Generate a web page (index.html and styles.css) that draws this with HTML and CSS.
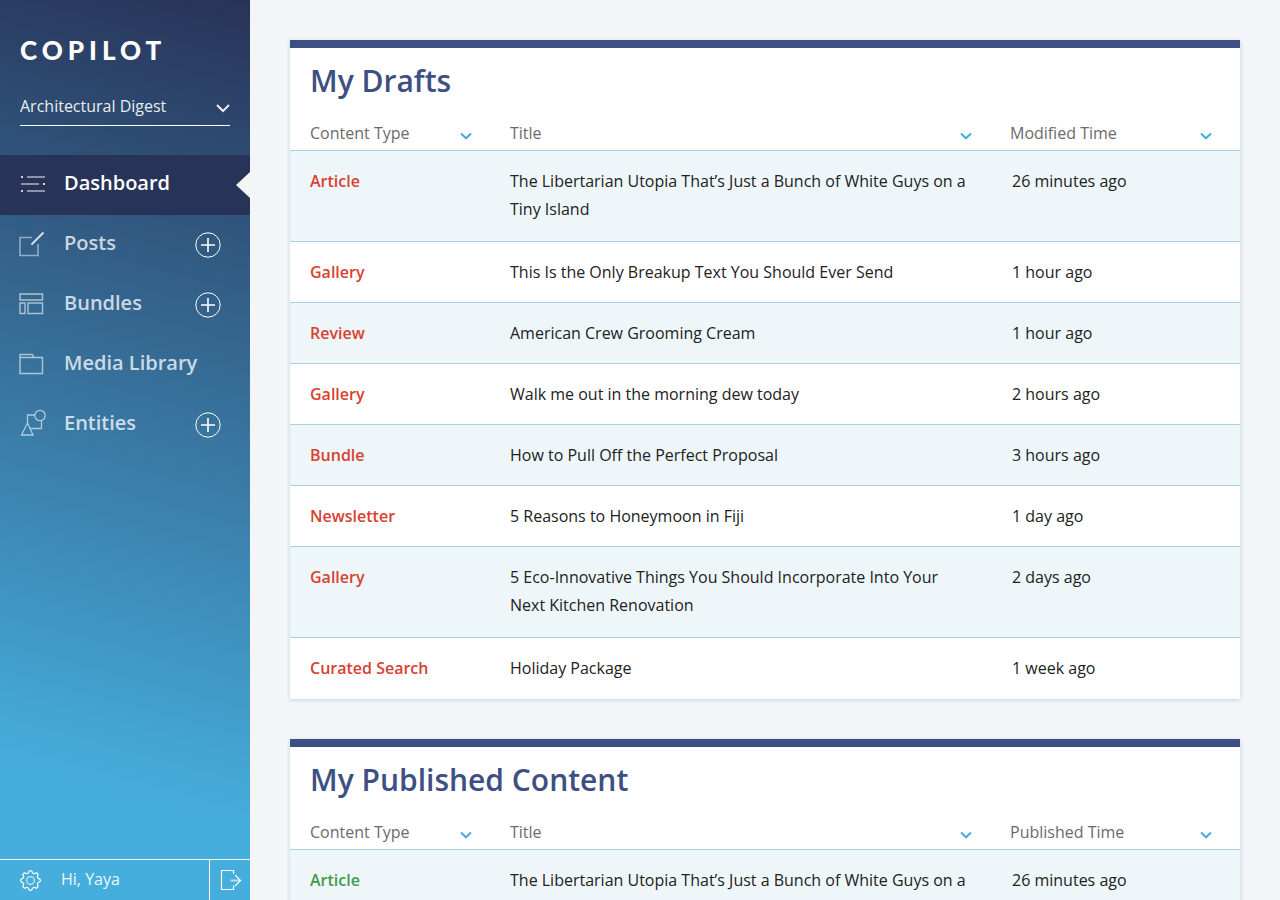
FILE: index.html
```html
<!DOCTYPE html>
<html lang="en">
<head>
<meta charset="utf-8">
<meta name="viewport" content="width=device-width, initial-scale=1">
<title>Copilot</title>
<link rel="stylesheet" href="styles.css">
</head>
<body>
<svg class="sprite" aria-hidden="true">
  <symbol id="plus" viewBox="0 0 26 26"><circle cx="13" cy="13" r="12.2"/><path d="M13 6v14M6 13h14" stroke-width="1.6"/></symbol>
  <symbol id="chevron" viewBox="0 0 12 8"><path d="M1 1.500 6 6.300l5-4.800" stroke-width="2"/></symbol>
</svg>
<div class="app">
  <aside class="sidebar">
    <div class="logo">COPILOT</div>
    <div class="site">
      <select class="site-select" aria-label="Site"><option>Architectural Digest</option></select>
      <svg class="site-arrow" viewBox="0 0 14 10" aria-hidden="true"><path d="M1 2 7 8l6-6"/></svg>
    </div>
    <nav class="nav">
      <div class="nav-item active">
        <a class="nav-link" href="#dashboard">
          <svg class="nav-icon" viewBox="0 0 28 28" aria-hidden="true">
            <path class="soft" d="M9 6h18M3 13h18M9 20h18" stroke-width="2"/>
            <path d="M3 6h2M25 13h2M3 20h2" stroke-width="2"/>
          </svg>Dashboard</a>
      </div>
      <div class="nav-item">
        <a class="nav-link" href="#posts">
          <svg class="nav-icon" viewBox="0 0 28 28" aria-hidden="true">
            <path class="soft" d="M14 6.500H2v18h18V13" stroke-width="1.600"/>
            <path d="M13.500 13.500 25.500 1.500" stroke-width="2"/>
          </svg>Posts</a>
        <button class="add" type="button" aria-label="Add post"><svg aria-hidden="true"><use href="#plus"/></svg></button>
      </div>
      <div class="nav-item">
        <a class="nav-link" href="#bundles">
          <svg class="nav-icon" viewBox="0 0 28 28" aria-hidden="true">
            <path class="medium" d="M2 3h22.500v6H2zM2 12h5v10.500H2zM10 12h14.500v10.500H10z" stroke-width="1.400"/>
          </svg>Bundles</a>
        <button class="add" type="button" aria-label="Add bundle"><svg aria-hidden="true"><use href="#plus"/></svg></button>
      </div>
      <div class="nav-item">
        <a class="nav-link" href="#media">
          <svg class="nav-icon" viewBox="0 0 28 28" aria-hidden="true">
            <path class="medium" d="M2 6.500V3.500h12L16 6.500h8.500V22.500H2zM2 6.500h14" stroke-width="1.400"/>
          </svg>Media Library</a>
      </div>
      <div class="nav-item">
        <a class="nav-link" href="#entities">
          <svg class="nav-icon" viewBox="0 0 28 28" aria-hidden="true">
            <g class="medium" stroke-width="1.300"><circle cx="22" cy="4.500" r="5.200"/>
            <path d="M16.800 4H9.500v8M23.500 9.700V17.500H12.200M9.500 12 15 24H3.500z"/></g>
          </svg>Entities</a>
        <button class="add" type="button" aria-label="Add entity"><svg aria-hidden="true"><use href="#plus"/></svg></button>
      </div>
    </nav>
    <footer class="user">
      <a class="user-link" href="#settings">
        <svg class="gear" viewBox="0 0 22 22" aria-hidden="true">
          <path d="M19.800 9.130A1.900 1.900 0 0 1 19.800 12.870A2 2 0 0 0 18.550 15.900A1.900 1.900 0 0 1 15.900 18.550A2 2 0 0 0 12.870 19.800A1.900 1.900 0 0 1 9.130 19.800A2 2 0 0 0 6.100 18.550A1.900 1.900 0 0 1 3.450 15.900A2 2 0 0 0 2.200 12.870A1.900 1.900 0 0 1 2.200 9.130A2 2 0 0 0 3.450 6.100A1.900 1.900 0 0 1 6.100 3.450A2 2 0 0 0 9.130 2.200A1.900 1.900 0 0 1 12.870 2.200A2 2 0 0 0 15.900 3.450A1.900 1.900 0 0 1 18.550 6.100A2 2 0 0 0 19.800 9.130z"/>
          <circle class="medium" cx="11" cy="11" r="4"/>
        </svg><span class="greeting">Hi, Yaya</span></a>
      <button class="logout" type="button" aria-label="Log out">
        <svg viewBox="0 0 22 22" aria-hidden="true"><path d="M13.500 5V1.500H1.500v19H13.500v-4M15 6l5.500 5.500L15 17"/><path class="soft" d="M10.500 11.500H20" stroke-width="2"/></svg>
      </button>
    </footer>
  </aside>

  <main class="content">
    <section class="card">
      <h2 class="card-title">My Drafts</h2>
      <table class="list drafts">
        <thead><tr>
          <th class="col-type"><button class="sort" type="button">Content Type<svg aria-hidden="true"><use href="#chevron"/></svg></button></th>
          <th><button class="sort" type="button">Title<svg aria-hidden="true"><use href="#chevron"/></svg></button></th>
          <th class="col-time"><button class="sort" type="button">Modified Time<svg aria-hidden="true"><use href="#chevron"/></svg></button></th>
        </tr></thead>
        <tbody>
          <tr class="tall"><td>Article</td><td>The Libertarian Utopia That’s Just a Bunch of White Guys on a Tiny Island</td><td>26 minutes ago</td></tr>
          <tr><td>Gallery</td><td>This Is the Only Breakup Text You Should Ever Send</td><td>1 hour ago</td></tr>
          <tr><td>Review</td><td>American Crew Grooming Cream</td><td>1 hour ago</td></tr>
          <tr><td>Gallery</td><td>Walk me out in the morning dew today</td><td>2 hours ago</td></tr>
          <tr><td>Bundle</td><td>How to Pull Off the Perfect Proposal</td><td>3 hours ago</td></tr>
          <tr><td>Newsletter</td><td>5 Reasons to Honeymoon in Fiji</td><td>1 day ago</td></tr>
          <tr class="tall"><td>Gallery</td><td>5 Eco-Innovative Things You Should Incorporate Into Your Next Kitchen Renovation</td><td>2 days ago</td></tr>
          <tr><td>Curated Search</td><td>Holiday Package</td><td>1 week ago</td></tr>
        </tbody>
      </table>
    </section>

    <section class="card">
      <h2 class="card-title">My Published Content</h2>
      <table class="list published">
        <thead><tr>
          <th class="col-type"><button class="sort" type="button">Content Type<svg aria-hidden="true"><use href="#chevron"/></svg></button></th>
          <th><button class="sort" type="button">Title<svg aria-hidden="true"><use href="#chevron"/></svg></button></th>
          <th class="col-time"><button class="sort" type="button">Published Time<svg aria-hidden="true"><use href="#chevron"/></svg></button></th>
        </tr></thead>
        <tbody>
          <tr class="tall"><td>Article</td><td>The Libertarian Utopia That’s Just a Bunch of White Guys on a</td><td>26 minutes ago</td></tr>
        </tbody>
      </table>
    </section>
  </main>
</div>
</body>
</html>
```
FILE: styles.css
```css
* { box-sizing: border-box; }

body {
  margin: 0;
  background: #f4f5f7;
  color: #222;
  font: 16px/28px "Open Sans", "Noto Sans", sans-serif;
}

button, select { font: inherit; color: inherit; background: none; border: 0; margin: 0; padding: 0; }
button { cursor: pointer; }
a { color: inherit; text-decoration: none; }
svg { fill: none; stroke: currentColor; flex: none; display: block; overflow: visible; }

.sprite { position: absolute; width: 0; height: 0; }
.soft { opacity: .6; }
.medium { opacity: .75; }

.app { display: flex; height: 100vh; }

/* Sidebar */
.sidebar {
  flex: none;
  width: 250px;
  display: flex;
  flex-direction: column;
  color: #fff;
  background: linear-gradient(195deg, #283358, #46aedd 86%);
}

.logo {
  padding: 34px 20px 0;
  font: 900 26px/32px Lato, sans-serif;
  letter-spacing: 5px;
}

.site {
  display: grid;
  align-items: center;
  margin: 20px 20px 29px;
  border-bottom: 1px solid #fff;
}
.site-select {
  grid-area: 1 / 1;
  appearance: none;
  width: 100%;
  height: 39px;
  padding-top: 1px;
  opacity: .9;
}
.site-arrow { grid-area: 1 / 1; justify-self: end; width: 14px; height: 10px; margin-top: 4px; stroke-width: 2; opacity: .9; pointer-events: none; }

.nav { flex: 1; }
.nav-item {
  display: flex;
  align-items: center;
  justify-content: space-between;
  height: 60px;
  padding: 0 29px 0 18px;
}
.nav-link {
  display: flex;
  align-items: center;
  gap: 18px;
  padding-bottom: 4px;
  font-size: 20px;
  font-weight: 600;
  color: rgba(255, 255, 255, .75);
}
.nav-icon { width: 28px; height: 28px; margin-top: 4px; color: #fff; opacity: .8; }
.active { background: #283358; padding-right: 0; }
.active .nav-link { color: #fff; }
.active::after {
  content: "";
  border: solid transparent;
  border-width: 13px 14px 13px 0;
  border-right-color: #f4f5f7;
}
.add svg { width: 26px; height: 26px; stroke-width: 1; }

.user { display: flex; height: 41px; border-top: 1px solid #fff; }
.user-link { flex: 1; display: flex; align-items: center; gap: 20px; padding-left: 20px; }
.greeting { padding-bottom: 2px; opacity: .9; }
.gear { width: 21px; height: 21px; stroke-width: 1.3; }
.logout { width: 41px; padding-left: 10px; border-left: 1px solid #fff; }
.logout svg { width: 22px; height: 22px; stroke-width: 1.2; }

/* Content */
.content {
  flex: 1;
  min-width: 0;
  padding: 40px;
  overflow-y: auto;
  scrollbar-width: none;
}
.card {
  margin-bottom: 40px;
  background: #fff;
  border-top: 8px solid #3e5083;
  box-shadow: 0 1px 4px rgba(70, 160, 200, .35);
}
.card-title {
  margin: 0;
  padding: 12px 20px 14px;
  font-size: 30px;
  line-height: 42px;
  font-weight: 600;
  color: #3e5083;
}

.list { width: 100%; table-layout: fixed; border-collapse: separate; border-spacing: 0; }
.col-type { width: 200px; }
.col-time { width: 250px; }

th { height: 35px; padding: 0 18px 0 20px; font-weight: 400; border-bottom: 1px solid #a9d3e3; }
th.col-time { padding-right: 28px; }
.sort {
  display: flex;
  align-items: center;
  justify-content: space-between;
  width: 100%;
  height: 34px;
  color: #6b6b6b;
}
.sort svg { width: 12px; height: 8px; margin-top: 6px; color: #46aedd; }

td { height: 61px; padding: 16px 20px; vertical-align: top; border-bottom: 1px solid #a9d3e3; }
tr:last-child td { border-bottom-color: transparent; }
.tall td { height: 91px; }
tbody tr:nth-child(odd) { background: #eef6fa; }
td:first-child { font-weight: 600; }
td:last-child { padding-left: 22px; }
.drafts td:first-child { color: #d8412f; }
.published td:first-child { color: #449a4c; }
```
